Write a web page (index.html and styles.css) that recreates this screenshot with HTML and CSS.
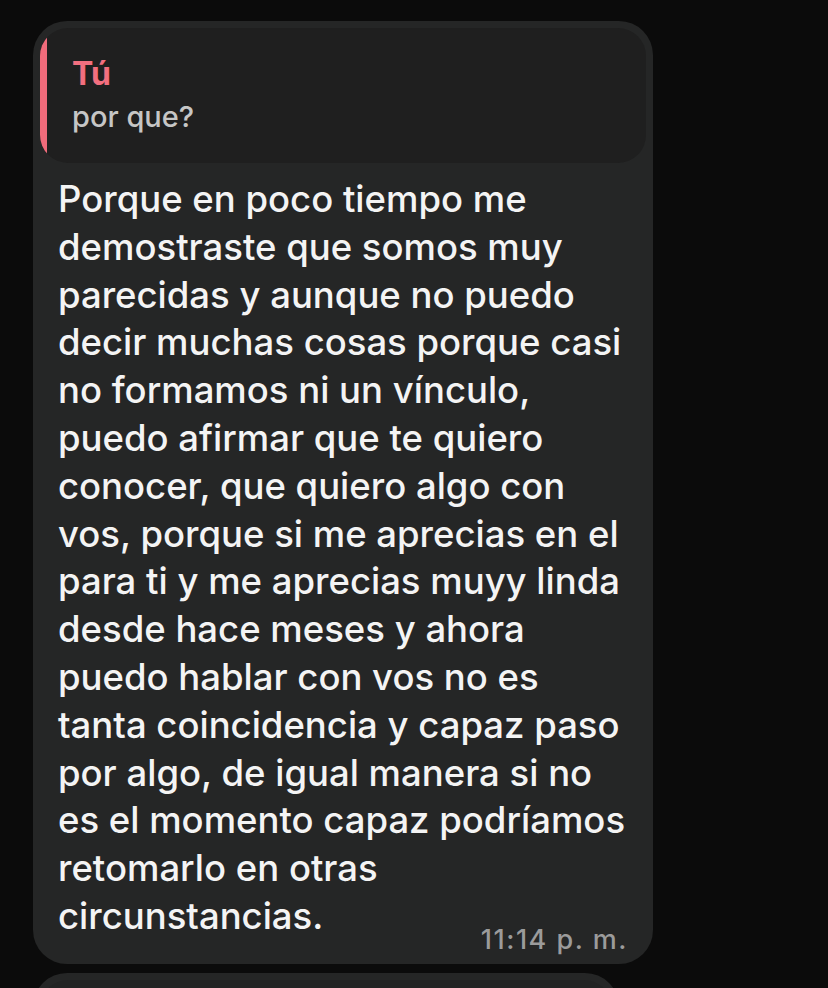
FILE: index.html
```html
<!DOCTYPE html>
<html lang="es">
<head>
    <meta charset="UTF-8">
    <meta name="viewport" content="width=device-width, initial-scale=1.0">
    <title>Chat</title>
    <link rel="stylesheet" href="styles.css">
</head>
<body>
    <div class="chat">
        <div class="bubble">
            <div class="reply">
                <div class="reply-bar"></div>
                <div class="reply-body">
                    <div class="reply-name">Tú</div>
                    <div class="reply-text">por que?</div>
                </div>
            </div>
            <p class="message">Porque en poco tiempo me<br>
                demostraste que somos muy<br>
                parecidas y aunque no puedo<br>
                decir muchas cosas porque casi<br>
                no formamos ni un vínculo,<br>
                puedo afirmar que te quiero<br>
                conocer, que quiero algo con<br>
                vos, porque si me aprecias en el<br>
                para ti y me aprecias muyy linda<br>
                desde hace meses y ahora<br>
                puedo hablar con vos no es<br>
                tanta coincidencia y capaz paso<br>
                por algo, de igual manera si no<br>
                es el momento capaz podríamos<br>
                retomarlo en otras<br>
                circunstancias.</p>
            <div class="time">11:14 p. m.</div>
        </div>

        <div class="bubble bubble-next">
            <div class="reply reply-next"></div>
        </div>
    </div>
</body>
</html>
```

FILE: styles.css
```css
body {
    margin: 0;
    padding: 0;
    background: #0b0b0b;
    font-family: 'Inter', 'Liberation Sans', sans-serif;
    color: #f4f4f4;
    height: 988px;
    overflow: hidden;
}
.chat {
    display: flex;
    flex-direction: column;
    gap: 9px;
    padding: 21px 0 0 33px;
}
.bubble {
    width: 620px;
    box-sizing: border-box;
    background: #252626;
    border-radius: 34px;
    padding: 7px 7px 0 7px;
}
.reply {
    display: flex;
    height: 135px;
    background: #1f1f1f;
    border-radius: 28px;
    overflow: hidden;
}
.reply-bar {
    width: 7px;
    flex-shrink: 0;
    background: #f06b7b;
}
.reply-body {
    padding: 27px 0 0 25px;
}
.reply-name {
    color: #f26f7f;
    font-weight: 700;
    font-size: 32px;
    line-height: 37px;
}
.reply-text {
    margin-top: 8px;
    color: #c6c6c6;
    font-size: 29px;
    font-weight: 500;
    line-height: 33px;
}
.message {
    margin: 13px 0 0 0;
    padding: 0 0 0 18px;
    font-size: 36.5px;
    font-weight: 500;
    line-height: 47.8px;
    white-space: nowrap;
}
.time {
    margin-top: -16px;
    padding: 0 18px 9px 0;
    text-align: right;
    color: #9b9b9b;
    font-size: 27px;
    font-weight: 500;
    line-height: 30px;
    letter-spacing: 1.5px;
}
.bubble-next {
    width: 586px;
    height: 200px;
}
.reply-next {
    height: 200px;
    background: #222323;
}
```
